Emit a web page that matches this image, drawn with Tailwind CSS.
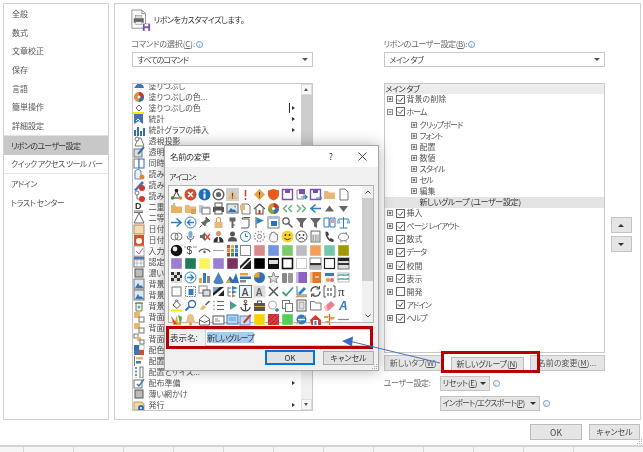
<!DOCTYPE html>
<html lang="ja">
<head>
<meta charset="UTF-8">
<title>リボンのユーザー設定</title>
<script src="https://cdn.jsdelivr.net/npm/@tailwindcss/browser@4"></script>
</head>
<body class="bg-white overflow-hidden">
<div class="relative w-[643px] h-[452px] overflow-hidden bg-white text-[#444] text-[8px] leading-none whitespace-nowrap font-['Noto_Sans_CJK_JP',sans-serif] [font-feature-settings:'palt'] blur-[0.4px]">

  <!-- upper area -->
  <div class="flex gap-[4.5px] pt-[3px] pl-[3px] h-[420px]">
    <!-- sidebar -->
    <nav class="w-[106px] h-[417px] border border-[#d0d0d0] bg-white pt-[0.7px] text-[#555]">
      <div class="h-[18.7px] pl-[8px] flex items-center">全般</div>
      <div class="h-[18.7px] pl-[8px] flex items-center">数式</div>
      <div class="h-[18.7px] pl-[8px] flex items-center">文章校正</div>
      <div class="h-[18.7px] pl-[8px] flex items-center">保存</div>
      <div class="h-[18.7px] pl-[8px] flex items-center">言語</div>
      <div class="h-[18.7px] pl-[8px] flex items-center">簡単操作</div>
      <div class="h-[19px] pl-[8px] flex items-center border-b border-[#e4e4e4]">詳細設定</div>
      <div class="h-[19.5px] pl-[7px] flex items-center bg-[#c8c8c8] text-[#333] tracking-[-0.7px]">リボンのユーザー設定</div>
      <div class="h-[19px] pl-[7px] flex items-center border-b border-[#e4e4e4] tracking-[-0.55px]">クイック アクセス ツール バー</div>
      <div class="h-[19px] pl-[7px] flex items-center tracking-[-0.5px]">アドイン</div>
      <div class="h-[18.7px] pl-[7px] flex items-center tracking-[-0.5px]">トラスト センター</div>
    </nav>

    <!-- main panel -->
    <main class="w-[527.5px] h-[417px] border border-[#d0d0d0] bg-white pl-[17px]">
      <div class="flex items-center h-[27px] mt-[4px] gap-[3px]">
        <svg class="mt-[-3px] ml-[-1px]" width="20" height="22" viewBox="0 0 22 24">
          <path d="M1 1h11l4 4v16H1z" fill="#fff" stroke="#8a8a8a"/>
          <path d="M12 1v4h4" fill="none" stroke="#8a8a8a"/>
          <rect x="3" y="10" width="11" height="5" fill="#666"/>
          <rect x="5" y="7" width="7" height="3" fill="#ddd" stroke="#777" stroke-width=".5"/>
          <rect x="5" y="14" width="7" height="3" fill="#eee" stroke="#777" stroke-width=".5"/>
          <rect x="13" y="16" width="8" height="8" fill="#7d4fa8"/>
          <rect x="15" y="16.5" width="4" height="2.5" fill="#fff"/>
          <rect x="15" y="21" width="4" height="3" fill="#fff"/>
        </svg>
        <span class="text-[8px] text-[#333] mt-[-3px] tracking-[-0.4px]">リボンをカスタマイズします。</span>
      </div>

      <div class="flex">
        <!-- left column -->
        <section class="w-[181px]">
          <div class="h-[10px] mt-[4px] flex items-center gap-[1px] text-[#666]"><span class="tracking-[-0.1px]">コマンドの選択(<u>C</u>):</span><span class="w-[7px] h-[7px] rounded-full border border-[#6b9ad6] text-[#5a8ad0] text-[5px] flex items-center justify-center">i</span></div>
          <div class="h-[15px] mt-[3px] border border-[#c8c8c8] flex items-center justify-between pl-[5px] pr-[4px] text-[#444]">
            <span class="tracking-[-0.9px]">すべてのコマンド</span><span class="border-x-[3px] border-t-[3px] border-x-transparent border-t-[#555]"></span>
          </div>
          <div class="relative h-[328px] mt-[15.5px] border border-[#c8c8c8] overflow-hidden">
            <div id="commands" class="mt-[-3px] text-[#555]"></div>
            <!-- scrollbar -->
            <div class="absolute top-0 right-0 w-[11px] h-full bg-[#f0f0f0] flex flex-col">
              <div class="h-[11px] bg-[#f8f8f8] border border-[#ddd] flex items-center justify-center"><span class="border-x-[2.5px] border-b-[3px] border-x-transparent border-b-[#555]"></span></div>
              <div class="h-[60px] bg-[#cdcdcd]"></div>
              <div class="flex-1"></div>
              <div class="h-[11px] bg-[#f8f8f8] border border-[#ddd] flex items-center justify-center"><span class="border-x-[2.5px] border-t-[3px] border-x-transparent border-t-[#555]"></span></div>
            </div>
          </div>
        </section>

        <!-- right column -->
        <section class="w-[221px] ml-[71px]">
          <div class="h-[10px] mt-[4px] flex items-center gap-[1px] text-[#666]"><span class="tracking-[-0.4px]">リボンのユーザー設定(<u>B</u>):</span><span class="w-[7px] h-[7px] rounded-full border border-[#6b9ad6] text-[#5a8ad0] text-[5px] flex items-center justify-center">i</span></div>
          <div class="h-[15px] mt-[3px] border border-[#c8c8c8] flex items-center justify-between pl-[5px] pr-[4px] text-[#444]">
            <span class="tracking-[-0.5px]">メイン タブ</span><span class="border-x-[3px] border-t-[3px] border-x-transparent border-t-[#555]"></span>
          </div>
          <div id="tree" class="h-[270px] mt-[15.5px] border border-[#c8c8c8] overflow-hidden text-[#555]"></div>
          <div class="flex mt-[2px] h-[16px]">
            <button class="w-[59px] h-[16px] bg-[#e5e5e5] border border-[#c4c4c4] text-[#555] text-[8px] tracking-[-0.3px]">新しいタブ(<u>W</u>)</button>
            <button class="w-[73px] h-[14px] ml-[8px] mt-[2px] bg-[#e5e5e5] border border-[#bdbdbd] text-[#444] text-[8px] tracking-[-0.2px]">新しいグループ(<u>N</u>)</button>
            <button class="w-[75px] h-[16px] ml-[6px] bg-[#e5e5e5] border border-[#c4c4c4] text-[#555] text-[8px]">名前の変更(<u>M</u>)...</button>
          </div>
          <div class="flex items-center h-[15px] mt-[5px] text-[#666]">
            <span class="w-[56px] tracking-[-0.3px]">ユーザー設定:</span>
            <span class="w-[50px] h-[15px] bg-[#e5e5e5] border border-[#c4c4c4] flex items-center justify-between px-[2px] text-[#444]"><span class="tracking-[-0.3px]">リセット(<u>E</u>)</span><span class="border-x-[3px] border-t-[3px] border-x-transparent border-t-[#333] mr-[1px]"></span></span>
            <span class="w-[7px] h-[7px] ml-[3px] rounded-full border border-[#6b9ad6] text-[#5a8ad0] text-[5px] flex items-center justify-center">i</span>
          </div>
          <div class="flex items-center h-[15px] mt-[5px] ml-[56px]">
            <span class="w-[100px] h-[15px] bg-[#e5e5e5] border border-[#c4c4c4] flex items-center justify-between px-[2px] text-[#444]"><span class="tracking-[-0.75px]">インポート/エクスポート(<u>P</u>)</span><span class="border-x-[3px] border-t-[3px] border-x-transparent border-t-[#333] mr-[1px]"></span></span>
            <span class="w-[7px] h-[7px] ml-[3px] rounded-full border border-[#6b9ad6] text-[#5a8ad0] text-[5px] flex items-center justify-center">i</span>
          </div>
        </section>

        <!-- move buttons -->
        <div class="ml-[6px] mt-[182px] flex flex-col gap-[3px]">
          <div class="w-[21px] h-[16px] bg-[#e5e5e5] border border-[#c4c4c4] flex items-center justify-center"><span class="border-x-[3px] border-b-[3px] border-x-transparent border-b-[#333]"></span></div>
          <div class="w-[21px] h-[16px] bg-[#e5e5e5] border border-[#c4c4c4] flex items-center justify-center"><span class="border-x-[3px] border-t-[3px] border-x-transparent border-t-[#333]"></span></div>
        </div>
      </div>
    </main>
  </div>

  <!-- footer -->
  <div class="relative flex justify-end gap-[7px] pr-[3px] pt-[4px] h-[25px]">
    <button class="w-[52px] h-[16px] bg-[#e5e5e5] border border-[#bdbdbd] text-[#444] text-[8.5px]">OK</button>
    <button class="w-[51px] h-[16px] bg-[#e5e5e5] border border-[#bdbdbd] text-[#444] text-[8px]">キャンセル</button>
    <svg class="absolute right-[1px] bottom-[1px]" width="5" height="5" viewBox="0 0 5 5"><path d="M4 0h1v1H4zM2 2h1v1H2zM4 2h1v1H4zM0 4h1v1H0zM2 4h1v1H2zM4 4h1v1H4z" fill="#aaa"/></svg>
  </div>
  <div class="h-[7px] border-t-2 border-[#d4d4d4] bg-[#f6f6f6] flex pl-[23px]">
    <span class="w-[50px] border-l border-[#d8d8d8]"></span><span class="w-[50px] border-l border-[#d8d8d8]"></span><span class="w-[50px] border-l border-[#d8d8d8]"></span><span class="w-[50px] border-l border-[#d8d8d8]"></span><span class="w-[50px] border-l border-[#d8d8d8]"></span><span class="w-[50px] border-l border-[#d8d8d8]"></span><span class="w-[50px] border-l border-[#d8d8d8]"></span><span class="w-[50px] border-l border-[#d8d8d8]"></span><span class="w-[50px] border-l border-[#d8d8d8]"></span><span class="w-[50px] border-l border-[#d8d8d8]"></span><span class="w-[50px] border-l border-[#d8d8d8]"></span><span class="w-[50px] border-l border-[#d8d8d8]"></span>
  </div>

  <!-- rename dialog -->
  <div class="absolute left-[164px] top-[145px] w-[215px] h-[226px] bg-[#f0f0f0] border border-[#a8a8a8] shadow-[0_0_14px_rgba(0,0,0,0.3)] flex flex-col">
    <div class="h-[21px] bg-white flex items-center pl-[5px] text-[8.5px] text-[#333] shrink-0">
      <span class="tracking-[-0.5px]">名前の変更</span>
      <span class="ml-auto mr-[25px] text-[9px]">?</span>
      <svg class="mr-[11px]" width="9" height="9" viewBox="0 0 9 9"><path d="M.5.5l8 8M8.5.5l-8 8" stroke="#333" stroke-width=".9"/></svg>
    </div>
    <div class="h-[18px] flex items-center pl-[4px] pt-[2px] text-[#333] shrink-0 tracking-[-0.8px]">アイコン:</div>
    <div class="ml-[3px] w-[206px] h-[138px] border border-[#b4b4b4] bg-white flex shrink-0">
      <div id="icons" class="grid grid-cols-[repeat(13,13.9px)] auto-rows-[13.9px] pl-[0.5px] pt-[1.5px] w-[193px]"></div>
      <div class="w-[11px] bg-[#f0f0f0] flex flex-col">
        <div class="h-[12px] flex items-center justify-center"><svg width="6" height="4" viewBox="0 0 6 4"><path d="M.5 3.5L3 1l2.5 2.5" fill="none" stroke="#444"/></svg></div>
        <div class="h-[83px] bg-[#cdcdcd]"></div>
        <div class="flex-1"></div>
        <div class="h-[12px] flex items-center justify-center"><svg width="6" height="4" viewBox="0 0 6 4"><path d="M.5.5L3 3l2.5-2.5" fill="none" stroke="#444"/></svg></div>
      </div>
    </div>
    <div class="flex items-center h-[17px] mt-[6px] pl-[5px] shrink-0">
      <span class="w-[35px] text-[#333] text-[8.5px]">表示名:</span>
      <div class="w-[168px] h-[17px] bg-white border border-[#d0d0d0] flex items-center pl-[1px]"><span class="bg-[#a8cdf0] h-[11px] flex items-center text-[#333] text-[8px] tracking-[-0.7px]">新しいグループ</span></div>
    </div>
    <div class="flex mt-[4px] pl-[100px] shrink-0">
      <button class="w-[50px] h-[15px] bg-[#e1e1e1] border-2 border-[#0078d7] text-[#333] text-[8px]">OK</button>
      <button class="w-[51px] h-[14px] mt-[1px] ml-[8px] bg-[#e1e1e1] border border-[#adadad] text-[#333] text-[8px]">キャンセル</button>
    </div>
    <svg class="absolute right-[1px] bottom-[1px]" width="5" height="5" viewBox="0 0 5 5"><path d="M4 0h1v1H4zM2 2h1v1H2zM4 2h1v1H4zM0 4h1v1H0zM2 4h1v1H2zM4 4h1v1H4z" fill="#aaa"/></svg>
  </div>

  <!-- callouts drawn over the page -->
  <div class="absolute left-[166px] top-[326px] w-[207px] h-[23px] border-[3px] border-[#b80000]"></div>
  <div class="absolute left-[441px] top-[351px] w-[99px] h-[22px] border-[3px] border-[#b80000]"></div>
  <svg class="absolute left-[335px] top-[330px]" width="115" height="40" viewBox="0 0 115 40">
    <path d="M105 33L14 11" stroke="#4472c4" stroke-width="1"/>
    <path d="M7 11l11-4.500-1 10z" fill="#3a6cc6"/>
  </svg>
</div>

<script>
// labels stop at what shows beside the dialog
const commands = [
  ['塗りつぶし', 'bucket'], ['塗りつぶしの色...', 'pie'], ['塗りつぶしの色', 'fill', 2], ['統計', 'stat', 1],
  ['統計グラフの挿入', 'bars', 1], ['透視投影', 'persp'], ['透明', 'trans'], ['同時', 'sync'],
  ['読み', 'read'], ['読み', 'readp'], ['読み', 'readr'], ['二重', 'dbl'],
  ['二等', 'tri'], ['日付', 'date'], ['日付', 'date2'], ['入力', 'input'],
  ['認定', 'table'], ['濃い', 'shade'], ['背景', 'bg'], ['背景', 'bg'],
  ['背景', 'trash'], ['背面', 'back'], ['背面', 'back'], ['背面', 'back2'],
  ['配色', 'colors'], ['配置', 'align'], ['配置とサイズ...', 'size'], ['配布準備', 'dist', 1],
  ['薄い網かけ', 'shade'], ['発行', 'pub', 1]
];

// small pictures for the left command list
const listIcons = {
  bucket: '<path d="M1 8l4-5 5 2 1 3z" fill="#3f74b5"/>',
  pie: '<circle cx="6" cy="6" r="5" fill="#e08a3c"/><path d="M6 6V1a5 5 0 0 1 5 5z" fill="#c0392b"/><path d="M6 6h5a5 5 0 0 1-5 5z" fill="#2f6fb5"/><circle cx="6" cy="6" r="1.5" fill="#fff"/>',
  fill: '<path d="M3 6l3-3 3 3-3 3z" fill="#fff" stroke="#666"/><rect y="10" width="11" height="2" fill="#ffe800"/>',
  stat: '<path d="M1 1h9v10l-4-3-5 3z" fill="#3f74b5"/><path d="M3 8l2-2 2 2" stroke="#fff" fill="none"/>',
  bars: '<path d="M1 6h2v6H1zM4 3h2v9H4zM7 7h2v5H7zM10 4h2v8h-2z" fill="#2f6fb5"/>',
  persp: '<path d="M2 11l3-8h3l3 8z" fill="#fff" stroke="#777"/><circle cx="4" cy="4" r="2" fill="#fff" stroke="#777"/>',
  trans: '<rect x="1" y="3" width="8" height="8" fill="#ddd" stroke="#777"/><path d="M5 8l6-7" stroke="#2f6fb5" stroke-width="2"/>',
  sync: '<rect x="1" y="2" width="5" height="9" fill="#fff" stroke="#777"/><rect x="6" y="2" width="5" height="9" fill="#fff" stroke="#2f6fb5"/>',
  read: '<path d="M2 11V3l3-2 3 2v8z" fill="#eaf1f8" stroke="#5a8ac0"/><circle cx="9" cy="9" r="2.5" fill="#e0843c"/>',
  readp: '<path d="M1 11L9 2l2 2-8 8z" fill="#3f74b5"/><circle cx="9" cy="9" r="3" fill="#d0392b"/>',
  readr: '<circle cx="4" cy="3" r="2" fill="none" stroke="#777"/><path d="M4 5v4h4" fill="none" stroke="#777"/><circle cx="9" cy="9" r="3" fill="#d0392b"/>',
  dbl: '<text x="2" y="8" font-size="9" font-weight="700" font-family="Liberation Sans" fill="#333">D</text><path d="M1 10h9M1 11.5h9" stroke="#333" stroke-width=".7"/>',
  tri: '<path d="M6 1l5 10H1z" fill="#fff" stroke="#666"/>',
  date: '<rect x="1" y="2" width="10" height="9" fill="#f2d9b8" stroke="#b78a4c"/>',
  date2: '<rect x="1" y="1" width="10" height="11" fill="#d8512c"/><circle cx="6" cy="7" r="3" fill="#fff"/>',
  input: '<rect x="1" y="1" width="10" height="10" fill="#fff" stroke="#aaa"/><path d="M3 6l3 3 4-6" stroke="#d0607a" fill="none"/>',
  table: '<rect x="1" y="1" width="10" height="10" fill="#fff" stroke="#777"/><path d="M1 4h10M1 7h10M4 1v10M8 1v10" stroke="#999" stroke-width=".6"/><path d="M1 1h10v2.5H1z" fill="#4a7ab5"/>',
  shade: '<rect x="2" y="2" width="8" height="8" fill="#bbb" stroke="#555"/>',
  bg: '<rect x="1" y="1" width="10" height="10" fill="#dbe9f5" stroke="#777"/><path d="M2 10l3-5 2 3 1-1 3 3z" fill="#3f74b5"/>',
  trash: '<path d="M3 3h6v8H3z" fill="#eaf5ec" stroke="#777"/><path d="M2 3h8" stroke="#777"/><circle cx="6" cy="7" r="1.5" fill="#6bb37a"/>',
  back: '<rect x="1" y="1" width="6" height="6" fill="#eab868"/><rect x="6" y="6" width="5" height="5" fill="#fff" stroke="#777"/>',
  back2: '<rect x="1" y="1" width="4" height="4" fill="#fff" stroke="#777"/><rect x="4" y="4" width="4" height="4" fill="#eab868"/><rect x="7" y="7" width="4" height="4" fill="#fff" stroke="#777"/>',
  colors: '<rect x="1" y="1" width="5" height="5" fill="#2f6fb5"/><rect x="6" y="1" width="5" height="5" fill="#fff" stroke="#888" stroke-width=".5"/><rect x="1" y="6" width="5" height="5" fill="#3f74b5"/><rect x="6" y="6" width="5" height="5" fill="#d0512c"/>',
  align: '<path d="M1.5 1v10" stroke="#777"/><rect x="3" y="2" width="7" height="2.5" fill="#eab868"/><rect x="3" y="6" width="5" height="2.5" fill="#3f74b5"/>',
  size: '<rect x="7" y="1" width="3" height="11" fill="#fff" stroke="#777"/><path d="M3 1v11" stroke="#2f6fb5" stroke-dasharray="2 1.5" stroke-width="1.5"/>',
  dist: '<rect x="1" y="3" width="8" height="8" fill="#fff" stroke="#777"/><path d="M4 7l2 2 5-7" stroke="#3f74b5" fill="none" stroke-width="1.4"/>',
  pub: '<path d="M1 3h8l2 2v6H1z" fill="#f2d9a8" stroke="#c49a55"/><circle cx="8" cy="9" r="3" fill="#2f6fb5"/><circle cx="8" cy="9" r="1" fill="#fff"/>'
};

document.getElementById('commands').innerHTML = commands.map(c => `
  <div class="h-[11.03px] flex items-center">
    <svg class="shrink-0" width="12" height="12" viewBox="0 0 12 12">${listIcons[c[1]]}</svg>
    <span class="ml-[4px]">${c[0]}</span>
    ${c[2] === 2 ? '<span class="ml-auto mr-[2px] w-[1px] h-[10px] bg-[#333]"></span><span class="mr-[17px] border-y-[2.5px] border-l-[3px] border-y-transparent border-l-[#333]"></span>' : ''}
    ${c[2] === 1 ? '<span class="ml-auto mr-[17px] border-y-[2.5px] border-l-[3px] border-y-transparent border-l-[#333]"></span>' : ''}
  </div>`).join('');

// ribbon tree
const box = m => `<svg class="shrink-0" width="6" height="6" viewBox="0 0 6 6"><rect x=".5" y=".5" width="5" height="5" fill="#fff" stroke="#888"/><path d="M1.5 3h3${m ? '' : 'M3 1.5v3'}" stroke="#333" stroke-width=".8"/></svg>`;
const check = on => `<svg class="shrink-0 ml-[3.5px]" width="9" height="9" viewBox="0 0 9 9"><rect x=".5" y=".5" width="8" height="8" fill="#fff" stroke="#666"/>${on ? '<path d="M2 4.5l2 2 3-4" fill="none" stroke="#444" stroke-width=".9"/>' : ''}</svg>`;
const blank = '<span class="w-[6px] shrink-0"></span>';
const squeeze = label => /^[ァ-ヶー ]+$/.test(label) ? 'tracking-[-0.9px]' : '';

const tabRow = (label, opts = {}) => `<div class="h-[13.15px] flex items-center pl-[2px]">${opts.noExpand ? blank : box(opts.minus)}${check(!opts.off)}<span class="ml-[1.5px] ${squeeze(label)}">${label}</span></div>`;
const groupRow = label => `<div class="h-[11px] flex items-center pl-[26px]">${box()}<span class="ml-[3px] ${squeeze(label)}">${label}</span></div>`;

document.getElementById('tree').innerHTML =
  '<div class="h-[10px] bg-[#ececec] flex items-center pl-[1px] text-[#333] tracking-[-0.5px]">メイン タブ</div>' +
  tabRow('背景の削除') .replace('h-[13.15px]', 'h-[11.5px]') + tabRow('ホーム', { minus: true }) +
  '<div class="h-[1.7px]"></div>' +
  ['クリップボード', 'フォント', '配置', '数値', 'スタイル', 'セル', '編集'].map(groupRow).join('') +
  '<div class="h-[11px] mb-[-1.4px] bg-[#e4e4e4] flex items-center pl-[35px] text-[#333] tracking-[-0.3px]">新しいグループ (ユーザー設定)</div>' +
  tabRow('挿入') + tabRow('ページ レイアウト') + tabRow('数式') + tabRow('データ') + tabRow('校閲') + tabRow('表示') +
  tabRow('開発', { off: true }) + tabRow('アドイン', { noExpand: true }) + tabRow('ヘルプ');

// icon picker, one string per cell
const sq = c => `<rect x="1" y="1" width="11" height="11" fill="${c}" stroke="#fff" stroke-width=".4"/>`;
const folder = c => `<path d="M1 3h4l1 1.5h6V11H1z" fill="${c}"/>`;
const funnel = '<path d="M1 2h11L8 7v5L5 10.5V7z" fill="#666"/>';
const floppy = c => `<path d="M1.5 1.5h10v10h-10z" fill="#fff" stroke="${c}" stroke-width="1.4"/><path d="M4 2h5v3H4z" fill="${c}"/>`;
const pickerIcons = [
  // row 1
  '<path d="M6.5 3L3 10M6.5 3l3.5 7M3 10h7" stroke="#333"/><circle cx="6.5" cy="2.5" r="1.8" fill="#222"/><circle cx="2.5" cy="10" r="1.8" fill="#3a8a3a"/><circle cx="10.5" cy="10" r="1.8" fill="#e08a2c"/>',
  '<circle cx="6.5" cy="6.5" r="6" fill="#d8492c"/><path d="M4 4l5 5M9 4l-5 5" stroke="#fff" stroke-width="1.6"/>',
  '<circle cx="6.5" cy="6.5" r="6" fill="#1c6fc0"/><rect x="5.5" y="5.5" width="2" height="5" fill="#fff"/><rect x="5.5" y="2.5" width="2" height="2" fill="#fff"/>',
  '<circle cx="6.5" cy="6.5" r="5.3" fill="none" stroke="#666" stroke-width="1.5"/><circle cx="6.5" cy="6.5" r="2.6" fill="#666"/>',
  '<rect x="-1" y="-1" width="15" height="15" fill="#cfcfcf"/><path d="M6.5 2l5 9h-10z" fill="#e8b878"/><path d="M6.5 5v3.5M6.5 9.5v1" stroke="#444"/>',
  '<path d="M6.5 2v6.5M6.5 10v2" stroke="#d8392c" stroke-width="1.5"/>',
  '<path d="M6.5 1l5.5 5.5-5.500 5.500L1 6.500z" fill="#eea23c"/><path d="M6.5 4v3.5M6.5 8.5v1" stroke="#333"/>',
  '<path d="M6.5 1l5.5 1.5v4c0 3-2.5 5-5.5 6-3-1-5.5-3-5.5-6v-4z" fill="#ea5a1c"/>',
  floppy('#7d4fb0'),
  '<path d="M2 2h7v9H2z" fill="#fff" stroke="#888"/><path d="M4 1h6v5H4z" fill="#7d4fb0"/><path d="M6 9h6M10 7l2 2-2 2" stroke="#2f7fc0" fill="none" stroke-width="1.2"/>',
  floppy('#7d4fb0') + '<path d="M7 10h5.5M11 8.5l1.5 1.5-1.5 1.5" stroke="#2f7fc0" fill="none"/>',
  folder('#e8b878'),
  '<path d="M3 1h5l3 3v8H3z" fill="#fff" stroke="#777"/>',
  // row 2
  folder('#e8b060') + '<path d="M4 1v2" stroke="#3f74b5"/>',
  folder('#e8b878') + '<path d="M7 7h5v5H7z" fill="#e0a050"/>',
  folder('#c9c9c9') + '<rect x="4" y="6" width="8" height="6" fill="#fff" stroke="#777"/>',
  '<rect x="3" y="1" width="7" height="4" fill="#fff" stroke="#555"/><rect x="1" y="5" width="11" height="5" fill="#555"/><rect x="3" y="8" width="7" height="4" fill="#fff" stroke="#555"/>',
  '<rect x="1" y="2" width="11" height="9" fill="#dceaf6" stroke="#666"/><path d="M2 10l3-4 2 2 1-1 3 3z" fill="#2f6fb5"/><circle cx="9" cy="4.5" r="1" fill="#e08a2c"/>',
  '<path d="M3 2h6l2 2v8H3z" fill="#fff" stroke="#777"/><rect x="1" y="3" width="5" height="5" fill="#e8b878"/>',
  '<path d="M1 7l5.5-5 5.5 5M3 6.500V12h7V6.500" fill="#fff" stroke="#555" stroke-width="1.1"/><rect x="5.5" y="8" width="2" height="4" fill="#c0392b"/>',
  '<circle cx="6.5" cy="6.5" r="5.5" fill="#e08a3c"/><path d="M6.5 6.5V1a5.5 5.5 0 0 1 5.5 5.5z" fill="#c0392b"/><path d="M6.5 6.5H12A5.5 5.5 0 0 1 6.5 12z" fill="#2f6fb5"/><path d="M6.5 6.5V12A5.5 5.5 0 0 1 1 6.5z" fill="#7aa83c"/><circle cx="6.5" cy="6.5" r="1.5" fill="#fff"/>',
  '<path d="M6 3L2.5 6.5 6 10M11 3L7.5 6.5 11 10" fill="none" stroke="#5fae7a" stroke-width="1.3"/>',
  '<path d="M2 3l3.5 3.5L2 10M7 3l3.500 3.500L7 10" fill="none" stroke="#5fae7a" stroke-width="1.3"/>',
  '<path d="M12 6.5H3M6.5 2.5L2 6.5l4.5 4" fill="none" stroke="#2f7fc0" stroke-width="1.6"/>',
  '<path d="M6.5 3.5l4.5 6H2z" fill="#666"/>',
  '<path d="M2 4h9l-4.5 6z" fill="#666"/>',
  // row 3
  '<path d="M1 6.5h9M6.5 2.5L11 6.5l-4.5 4" fill="none" stroke="#2f7fc0" stroke-width="1.6"/>',
  '<circle cx="6.5" cy="6.5" r="5.5" fill="#fff" stroke="#2f7fc0"/><path d="M10 6.5H4M6.5 3.5l-3 3 3 3" fill="none" stroke="#2f7fc0" stroke-width="1.3"/>',
  '<path d="M8 1l4 4-2 .5-2.5 2.5-.5 2L3.5 6.5l2-.5L8 3.5zM4.5 8.5L1.5 11.5" fill="#666" stroke="#666"/>',
  '<rect x="2.5" y="6" width="8" height="6" fill="#e8b878"/><path d="M4.5 6V3.5a2 2 0 0 1 4 0V6" fill="none" stroke="#d09a58" stroke-width="1.2"/>',
  '<rect x="3.5" y="1.5" width="6" height="4" fill="#666"/><path d="M6.5 5v7" stroke="#666" stroke-width="2"/><path d="M7 9h2" stroke="#666"/>',
  '<path d="M3 3h7v7a2 2 0 0 1-2 2H2" fill="#fff" stroke="#555"/><path d="M3 3a1.5 1.5 0 0 1 1.5-1.5H11" fill="none" stroke="#555"/>',
  '<path d="M3 1v11" stroke="#555"/><path d="M3.5 1.5L11 4.5 3.5 8z" fill="#2f7fc0"/>',
  '<rect x="1" y="1" width="11" height="11" fill="#fff" stroke="#777"/><path d="M1 1h11v2H1z" fill="#9cc4e4"/><rect x="4" y="5" width="6" height="5" fill="#2f6fb5"/>',
  '<circle cx="5" cy="5" r="3.2" fill="#fff" stroke="#555" stroke-width="1.2"/><path d="M7.5 7.5l4 4" stroke="#555" stroke-width="1.6"/>',
  funnel,
  funnel,
  '<path d="M1 2h5v9H1z" fill="#fff" stroke="#2f7fc0"/><path d="M7 2h5v9H7z" fill="#fff" stroke="#2f7fc0"/><path d="M8 4h3M8 6h3" stroke="#d0392b"/>',
  '<path d="M6.5 1v11M2.5 12h8M1.5 3h10" stroke="#2f7fc0"/><path d="M1.5 3L0 7h3zM11.5 3L10 7h3z" fill="#cfe2f3" stroke="#2f7fc0" stroke-width=".6"/>',
  // row 4
  '<circle cx="4.5" cy="6.5" r="3.5" fill="none" stroke="#777"/><circle cx="8.5" cy="6.5" r="3.5" fill="none" stroke="#777"/>',
  '<rect x="4.5" y="1" width="4" height="7" rx="2" fill="#7fa8d4"/><path d="M3 6a3.5 3.5 0 0 0 7 0M6.5 9.5V12" fill="none" stroke="#666"/>',
  '<path d="M2 5h2l3-3v9L4 8H2z" fill="#666"/><path d="M7 4l5 6M12 4l-5 6" stroke="#d8392c" stroke-width="1.3"/>',
  '<circle cx="6.5" cy="3.5" r="2.6" fill="#d89868"/><path d="M1.5 12.5c0-4 2-5.5 5-5.5s5 1.5 5 5.5z" fill="#333"/><path d="M6 7h1l.5 5h-2z" fill="#fff"/>',
  '<circle cx="6.5" cy="4" r="2.5" fill="#555"/><path d="M2 11.5c0-3.5 2-4.5 4.5-4.5s4.5 1 4.5 4.5z" fill="#555"/>',
  '<circle cx="6.5" cy="6.5" r="5" fill="#fff" stroke="#2f7fc0"/><path d="M6.5 3.5v3h2.5" fill="none" stroke="#2f7fc0"/>',
  '<circle cx="6.5" cy="6.5" r="2" fill="none" stroke="#888"/><circle cx="6.5" cy="6.5" r="5" fill="none" stroke="#999" stroke-width="1.4" stroke-dasharray="1.5 1.5"/>',
  '<path d="M3 7V4h1.500V2.500H6V2h1.500v1H9v1.500h1.500V9c0 2-1 3-3 3H6c-2 0-3-2-4-4z" fill="#f6f6f6" stroke="#888"/>',
  '<circle cx="6.5" cy="6.5" r="6" fill="#f6d02c"/><circle cx="4.5" cy="5" r=".9" fill="#333"/><circle cx="8.5" cy="5" r=".9" fill="#333"/><path d="M3.5 8a3.5 3.5 0 0 0 6 0" fill="none" stroke="#333"/>',
  '<circle cx="6.5" cy="6.5" r="5.5" fill="#fff" stroke="#555"/><circle cx="4.5" cy="5" r=".9" fill="#333"/><circle cx="8.5" cy="5" r=".9" fill="#333"/><path d="M3.5 9.5a3.5 3.5 0 0 1 6 0" fill="none" stroke="#333"/>',
  '<rect x="2" y="1" width="9" height="11" fill="#ddd" stroke="#777"/><rect x="3" y="2" width="7" height="2" fill="#fff"/><path d="M3.5 6h6M3.5 8h6M3.5 10h6" stroke="#777" stroke-dasharray="1.5 1"/>',
  '<path d="M3 1.5l2 .5 1 3-1.5 1 2 3 1.500-1 3 2-1 2c-4 0-8-5-7.500-10z" fill="#444"/>',
  '<ellipse cx="6.5" cy="7" rx="5" ry="3.8" fill="#fff" stroke="#777"/><path d="M9 2l.5 2M4 11v1.5M9 11v1.5" stroke="#777"/>',
  // row 5
  '<circle cx="6.5" cy="6.5" r="5.8" fill="#111"/><circle cx="5" cy="5" r="2.4" fill="#eee"/>',
  '<text x="2.5" y="10" font-size="10" font-family="Liberation Sans" fill="#444">$</text><path d="M1 2v2M10 2v2M12 2v2" stroke="#666" stroke-width=".7"/>',
  '<path d="M1 8c2-4 9-4 11 0" fill="none" stroke="#555" stroke-width="1.2"/><circle cx="6.5" cy="8" r="1.2" fill="#555"/>',
  '<path d="M1 6.5h11" stroke="#aaa" stroke-width="1.2"/>',
  '<path d="M1 1h3v3.5H1z" fill="#d8492c"/><path d="M5 1h3v3.5H5z" fill="#e8b04c"/><path d="M9 1h3v3.5H9z" fill="#2f7fc0"/><path d="M1 5h3v3.5H1z" fill="#e8843c"/><path d="M5 5h3v3.5H5z" fill="#7aa83c"/><path d="M9 5h3v3.5H9z" fill="#5a8ad0"/><path d="M1 9h3v3.5H1z" fill="#c0392b"/><path d="M5 9h3v3.5H5z" fill="#3a8a5a"/><path d="M9 9h3v3.5H9z" fill="#1c5fa0"/>',
  '<rect x="1.5" y="1.5" width="10" height="10" fill="#fff" stroke="#888"/>',
  sq('#d98a8a'), sq('#6f97e0'), sq('#7ccb6b'), sq('#bcbcc2'), sq('#f4a05a'), sq('#73c9ad'), sq('#a09a00'),
  // row 6
  sq('#9a7fd1'), sq('#1f7a5c'), sq('#fdf35f'), sq('#9a7fd1'), sq('#80305e'),
  '<rect x="1" y="1" width="11" height="11" fill="#222"/><path d="M1 12L12 1v2L3 12z" fill="#fff"/><path d="M1 1h8L1 9z" fill="#fff"/>',
  sq('#000'),
  '<rect x="1" y="1" width="11" height="11" fill="#111"/><rect x="2" y="3" width="9" height="4" fill="#ddd"/>',
  '<rect x="1.5" y="1.5" width="10" height="10" fill="#fff" stroke="#111" stroke-width="1.6"/>',
  '<rect x="1.5" y="1.5" width="10" height="10" fill="#fff" stroke="#ccc"/>',
  '<rect x="1" y="1" width="11" height="11" fill="#fff" stroke="#888"/><rect x="1" y="6" width="11" height="2.5" fill="#333"/><rect x="1" y="8.5" width="11" height="3.5" fill="#bbb"/>',
  '<rect x="1.5" y="1.5" width="10" height="10" fill="#fff" stroke="#222" stroke-width="1.2"/>',
  '<rect x="1" y="1" width="11" height="11" fill="#ddd" stroke="#777"/><rect x="1" y="1" width="11" height="3" fill="#222"/><rect x="1" y="6" width="11" height="2" fill="#333"/>',
  // row 7
  '<rect x="1" y="1" width="11" height="11" fill="#ddd"/><path d="M1 1h3v3H1zM7 1h3v3H7zM4 4h3v3H4zM10 4h2v3h-2zM1 7h3v3H1zM7 7h3v3H7z" fill="#333"/>',
  '<circle cx="6.5" cy="6.5" r="5.5" fill="#fff" stroke="#2f7fc0"/><path d="M3 6.5h6M6.5 3.5l3 3-3 3" fill="none" stroke="#2f7fc0" stroke-width="1.3"/>',
  '<path d="M1 7h3v5H1z" fill="#e8a23c"/><path d="M5 2h3v10H5z" fill="#2f7fc0"/><path d="M9 5h3v7H9z" fill="#888"/>',
  '<path d="M6.5 1l5 10a5 2 0 0 1-10 0z" fill="#4a84c0"/>',
  '<path d="M0 12l4-7 3 4 3-7 3 10z" fill="#2f6fb5"/><path d="M0 12l3-4 2 4z" fill="#e8a23c"/>',
  '<rect x="1" y="2" width="8" height="2.5" fill="#e8a23c"/><rect x="1" y="5.5" width="11" height="2.5" fill="#2f6fb5"/><rect x="1" y="9" width="6" height="2.5" fill="#888"/>',
  '<circle cx="6.5" cy="6.5" r="5.5" fill="#2f6fb5"/><path d="M6.5 6.5V1a5.5 5.5 0 0 0-5.5 5.5z" fill="#e8a23c"/>',
  '<path d="M6.5 1l1.5 4.5H12L9 8l1 4-3.5-2.5L3 12l1-4-3-2.500h4z" fill="#ddd" stroke="#888"/>',
  '<rect x="1" y="2" width="5" height="10" rx="1" fill="#888"/><rect x="7" y="2" width="5" height="10" rx="1" fill="#999"/>',
  '<rect x="1.5" y="1" width="10.5" height="11" fill="#8a64c0"/><rect x="1" y="1" width="2.5" height="11" fill="#cbb8e4"/>',
  '<rect x="1.5" y="1" width="10.5" height="11" fill="#e07a28"/><rect x="1" y="1" width="2.5" height="11" fill="#f4c090"/><path d="M6 6h4" stroke="#fff"/>',
  '<rect x="1" y="1" width="11" height="11" fill="#eaf2fa"/><rect x="2" y="2" width="9" height="3" fill="#2f7fc0"/><circle cx="5" cy="9" r="2" fill="#e89a3c"/><circle cx="9" cy="9" r="2" fill="#d86a8a"/>',
  '<rect x="1" y="2" width="11" height="9" fill="#fff" stroke="#bbb"/><path d="M1 4.5c3-2 7 1 11-1M1 8.5c3-2 7 1 11-1" fill="none" stroke="#3fa09a" stroke-width="1.4"/>',
  // row 8
  '<rect x="2" y="2" width="9" height="9" fill="#fff" stroke="#777"/>',
  '<rect x="1.5" y="1.5" width="10" height="10" fill="#fff" stroke="#777" stroke-dasharray="1.5 1"/><rect x="4.5" y="4" width="5" height="6" fill="#2f7fc0"/>',
  '<rect x="1" y="1" width="8" height="7" fill="#fff" stroke="#888"/><rect x="5" y="5" width="7" height="6" fill="#ddd" stroke="#555"/>',
  '<rect x="1" y="2" width="11" height="9" fill="#222"/><path d="M1 11L12 2v3l-6 6z" fill="#fff"/><path d="M1 2h7L1 8z" fill="#7fa8d4"/>',
  '<path d="M2 2v9M2 3h3M2 7h3M2 11h3" stroke="#777" fill="none"/><path d="M6 1l6 2-6 2zM6 5l5 2-5 2z" fill="#2f7fc0"/><path d="M6 9l4 2-4 1.5z" fill="#d8792c"/>',
  '<rect x=".5" y=".5" width="12" height="12" fill="#eef4fa" stroke="#2f7fc0"/><text x="2.5" y="10.5" font-size="10" font-weight="700" font-family="Liberation Sans" fill="#555">A</text>',
  '<rect x=".5" y=".5" width="12" height="12" fill="#ddd"/><text x="2.5" y="10.5" font-size="10" font-weight="700" font-family="Liberation Sans" fill="#666">A</text>',
  '<path d="M2 2l9 9M11 2l-9 9" stroke="#555" stroke-width="1.5"/>',
  '<path d="M1.5 7l3.5 3.5 7-8" fill="none" stroke="#3f9f7a" stroke-width="1.8"/>',
  '<path d="M2 1v9h10" fill="none" stroke="#2f7fc0"/><path d="M3 8l6-6 2 2-6 6z" fill="#2f7fc0"/><path d="M1 11.5h11" stroke="#d89a58" stroke-width="1.5"/>',
  '<path d="M2 6.5a4.5 4.5 0 0 1 8-3M11 6.5a4.5 4.5 0 0 1-8 3" fill="none" stroke="#555" stroke-width="1.3"/><path d="M10.5 1v3h-3M2.5 12V9h3" fill="none" stroke="#555"/>',
  '<path d="M3 1H1v11h2M10 1h2v11h-2" fill="none" stroke="#555"/><path d="M5 3v3M8 3v3M5 8v3M8 8v3" stroke="#555" stroke-width="1.2"/>',
  '<text x="1" y="11" font-size="13" font-family="Liberation Serif" fill="#333">π</text>',
  // row 9
  '<path d="M6.5 2l4 4-3.5 3.5-4-3.5z" fill="#fff" stroke="#555"/><path d="M5 2.5a1.5 1.5 0 0 1 3 0" fill="none" stroke="#555"/><rect x="1" y="10.5" width="11" height="2" fill="#ffe800"/>',
  '<circle cx="8" cy="5" r="3.5" fill="#fff" stroke="#2f6fb5" stroke-width="1.3"/><path d="M5.5 7.5l-4 4" stroke="#2f6fb5" stroke-width="1.8"/>',
  '<path d="M2 11c1-3 2-4 4-5l2 2c-1 2-3 3-6 3z" fill="#e8b868"/><path d="M7 5.5l4-4 1 1-4 4z" fill="#555"/>',
  '<path d="M1.5 2.5h1M1.5 6.5h1M1.5 10.5h1" stroke="#2f7fc0" stroke-width="1.4"/><path d="M5 2.5h7M5 6.5h7M5 10.5h7" stroke="#666"/>',
  '<path d="M4 2l7 4.5L4 11z" fill="#4f9f8a"/>',
  '<circle cx="6.5" cy="2.5" r="1.3" fill="none" stroke="#444"/><path d="M6.5 4v8M2 8c0 2 2 4 4.5 4S11 10 11 8M4.500 5.500h4" fill="none" stroke="#444" stroke-width="1.2"/>',
  '<rect x="1" y="4" width="11" height="8" fill="#555"/><path d="M4.5 4V2h4v2" fill="none" stroke="#555" stroke-width="1.2"/><rect x="1" y="7" width="11" height="1" fill="#e8a23c"/>',
  '<circle cx="5.5" cy="6" r="4" fill="#fff" stroke="#aaa"/><path d="M10 9v4M8 11h4" stroke="#2f7fc0" stroke-width="1.3"/>',
  '<rect x="1.5" y="1.5" width="7" height="8" fill="#fff" stroke="#777"/><rect x="4.5" y="4.5" width="7" height="8" fill="#fff" stroke="#777"/>',
  '<rect x="2" y="1" width="9" height="11" fill="#fff" stroke="#555"/><rect x="4" y="3" width="5" height="7" fill="#ddd" stroke="#777" stroke-width=".6"/>',
  '<path d="M1.5 11V2.5h4l1 1.5h5.5v7z" fill="#fff" stroke="#777"/>',
  '<path d="M1 8l7-6 4 4-7 6H3z" fill="#ee7f8f"/><path d="M1 8l2 4h2L3.5 6z" fill="#f6b8c0"/>',
  '<text x="2" y="11" font-size="12" font-weight="700" font-style="italic" font-family="Liberation Sans" fill="#2f7fc0">A</text>',
  // row 10
  '<path d="M1 3l3 8 3-9 1 9 4-7-1 8H3z" fill="#e8a23c"/><path d="M1 3l3 8h3z" fill="#d8392c"/><path d="M8 2l4 2-2 7z" fill="#4fae4f"/>',
  '<path d="M6.5 1c3 0 3.5 3 3.5 5l1.5 3.5h-10L3 6c0-2 .5-5 3.5-5z" fill="#e8c088"/><circle cx="6.5" cy="11" r="1.5" fill="#d89a58"/>',
  '<path d="M1.5 6L6.5 2l5 4v6h-10z" fill="#fff" stroke="#666"/><path d="M1.5 7l5 2.5 5-2.5" fill="none" stroke="#666"/>',
  '<rect x="1" y="3" width="11" height="8" fill="#fff" stroke="#555"/><path d="M3 6h3M3 8h5" stroke="#888"/>',
  '<rect x="1" y="2" width="11" height="9" fill="#bcd8f0" stroke="#2f7fc0"/><path d="M3 5h7M3 7h7" stroke="#2f7fc0" stroke-width=".7"/>',
  '<rect x="1" y="3" width="10" height="9" fill="#c8dcf0" stroke="#5a8ad0"/><path d="M4 9l7-8 1.5 1.5-7 8z" fill="#d8392c"/>',
  sq('#fdd000'),
  '<rect x="1" y="1" width="11" height="11" fill="#d83a3a"/><path d="M1 5l4-4M1 9l8-8M3 12l9-9M7 12l5-5" stroke="#a81c1c" stroke-width=".7"/>',
  sq('#53cf55'),
  '<circle cx="6.5" cy="6.5" r="5" fill="#2f7fc0"/><path d="M1 11c2-1 8-6 10-9" stroke="#e8a23c" fill="none"/><path d="M3 6.5h7" stroke="#fff" stroke-width="1.4"/>',
  '<path d="M1 7l5.5-5L12 7v5H2.5z" fill="#d8392c"/><rect x="4" y="7" width="5" height="5" fill="#fff"/><rect x="5.5" y="8" width="2" height="4" fill="#2f7fc0"/>',
  '<path d="M6.5 1v11" stroke="#c8742c" stroke-width="1.3"/><path d="M1 3h5l-1.5 2H1zM12 4H7v2.5h3.5zM2 8h5v2H3.5z" fill="#e89a4c"/>',
  '<path d="M1 6.5h11" stroke="#888" stroke-width="1.2"/>'
];

document.getElementById('icons').innerHTML = pickerIcons.map(i =>
  `<div class="flex items-center justify-center"><svg width="13" height="13" viewBox="0 0 13 13">${i}</svg></div>`
).join('');
</script>
</body>
</html>
